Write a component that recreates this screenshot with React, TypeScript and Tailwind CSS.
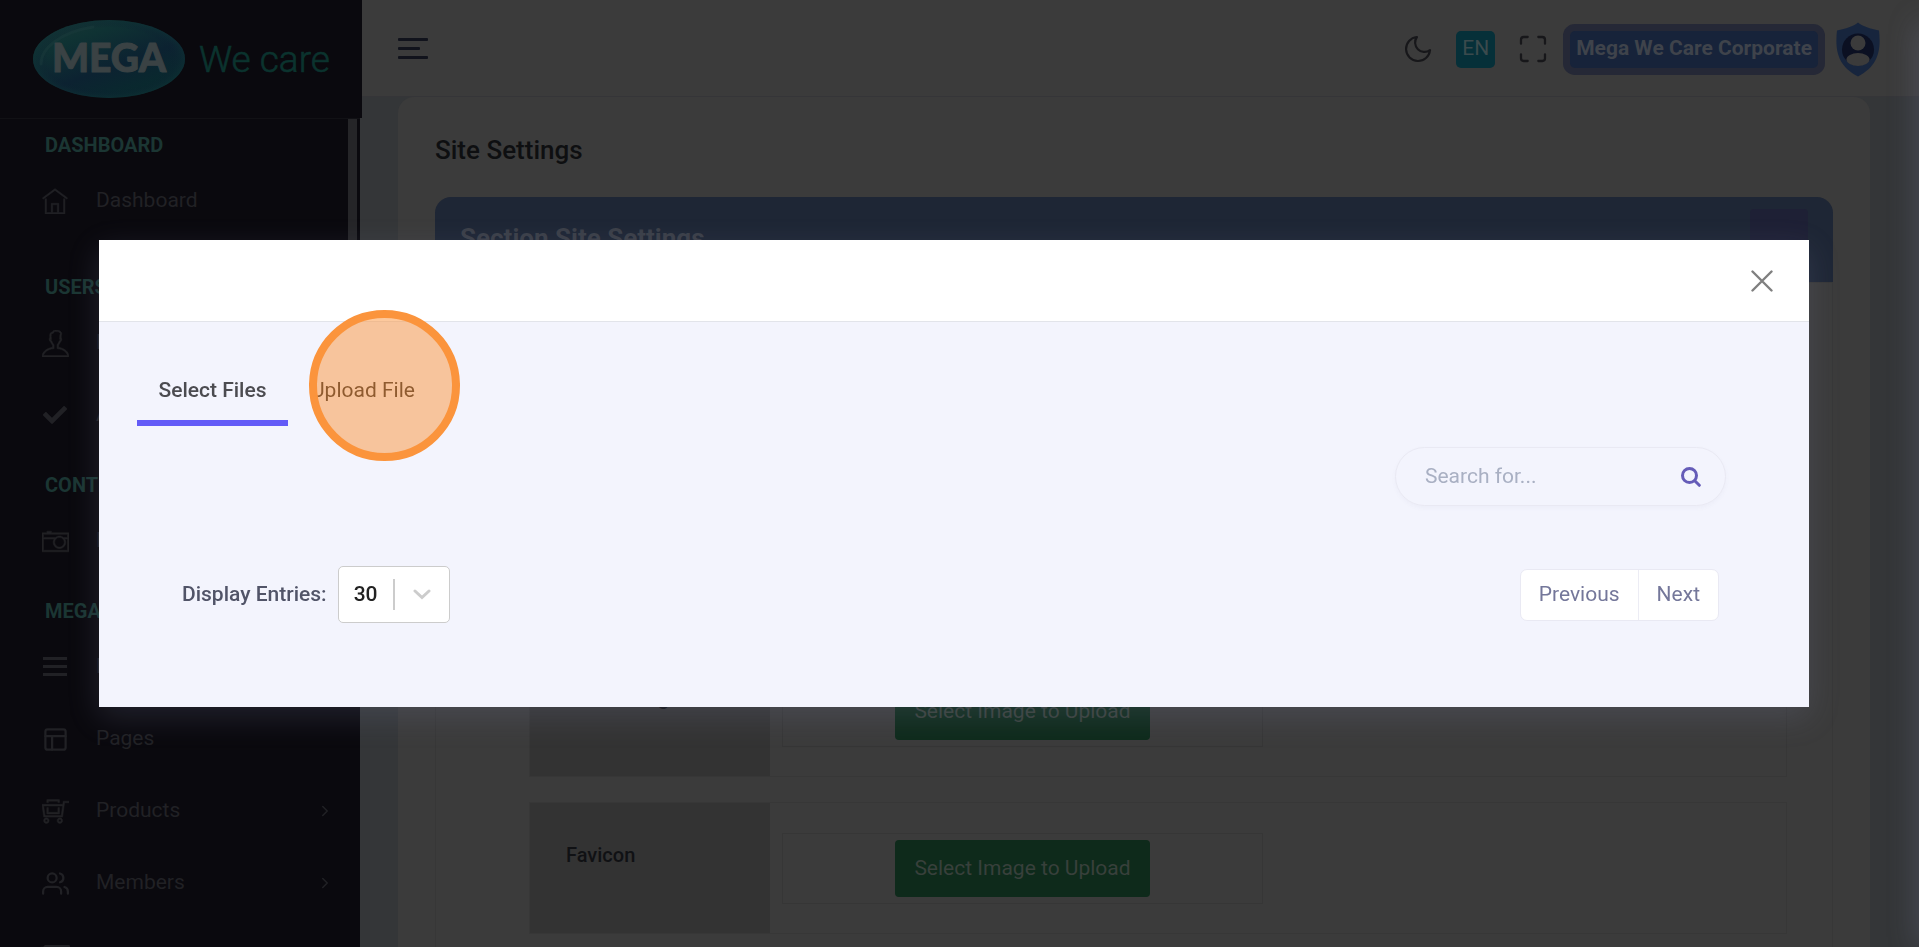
import React from 'react';
import { TfiHome, TfiUser, TfiCamera, TfiShoppingCartFull } from 'react-icons/tfi';
import { FiLayout, FiUsers, FiMaximize, FiMoon, FiChevronRight } from 'react-icons/fi';
import { FaCheck, FaRegNewspaper } from 'react-icons/fa';

type Item = { label: string; icon: React.ReactNode; more?: boolean; iconOnly?: boolean };
type Group = { title: string; items: Item[] };

const BarsIcon = () => (
  <svg width="26" height="26" viewBox="0 0 26 26" fill="currentColor">
    <rect x="1" y="3" width="24" height="3" />
    <rect x="1" y="11" width="24" height="3" />
    <rect x="1" y="19" width="24" height="3" />
  </svg>
);

const groups: Group[] = [
  { title: 'DASHBOARD', items: [{ label: 'Dashboard', icon: <TfiHome size={26} strokeWidth={0.3} /> }] },
  {
    title: 'USERS',
    items: [
      { label: 'Profile', icon: <TfiUser size={27} strokeWidth={0.3} /> },
      { label: 'Approval', icon: <FaCheck size={24} /> },
    ],
  },
  { title: 'CONTENT', items: [{ label: 'Media', icon: <TfiCamera size={27} strokeWidth={0.3} /> }] },
  {
    title: 'MEGA',
    items: [
      { label: 'Menus', icon: <BarsIcon /> },
      { label: 'Pages', icon: <FiLayout size={27} /> },
      { label: 'Products', icon: <TfiShoppingCartFull size={27} strokeWidth={0.3} />, more: true },
      { label: 'Members', icon: <FiUsers size={27} />, more: true },
      { label: 'News', icon: <FaRegNewspaper size={30} />, iconOnly: true },
    ],
  },
];

function Logo() {
  return (
    <svg width="300" height="84" viewBox="0 0 300 84" role="img" aria-label="MEGA We care">
      <defs>
        <linearGradient id="oval" x1="0" y1="0" x2="0.7" y2="1">
          <stop offset="0" stopColor="#1a3836" />
          <stop offset="0.3" stopColor="#0f3233" />
          <stop offset="0.65" stopColor="#0c2231" />
          <stop offset="1" stopColor="#082b2d" />
        </linearGradient>
        <radialGradient id="edge" cx="0.5" cy="0.5" r="0.5">
          <stop offset="0.8" stopColor="#0d1c30" stopOpacity="0" />
          <stop offset="1" stopColor="#0e3034" stopOpacity="0.6" />
        </radialGradient>
      </defs>
      <ellipse cx="76" cy="43" rx="76" ry="39" fill="url(#oval)" />
      <ellipse cx="76" cy="43" rx="76" ry="39" fill="url(#edge)" />
      <path d="M8 48C8 32 28 16 60 11" fill="none" stroke="#1f3f3e" strokeWidth="3" strokeLinecap="round" opacity="0.4" />
      <text
        x="76"
        y="56"
        textAnchor="middle"
        fontFamily="Lato, sans-serif"
        fontWeight="900"
        fontSize="39"
        fill="#3a4244"
        stroke="#3a4244"
        strokeWidth="1"
        strokeLinejoin="round"
      >
        MEGA
      </text>
      <text x="166" y="56" fontFamily="Roboto, sans-serif" fontWeight="300" fontSize="37" fill="#0b332e" stroke="#0b332e" strokeWidth="0.6">
        We care
      </text>
    </svg>
  );
}

function Sidebar() {
  return (
    <aside className="flex w-[362px] shrink-0 flex-col overflow-hidden">
      <div className="flex h-[118px] shrink-0 items-center bg-[#0a090e] pb-[2px] pl-[33px]">
        <Logo />
      </div>
      <div className="mr-[2px] flex min-h-0 flex-1 border-t border-[#111115] bg-[#0a090e]">
        <nav className="flex-1 pt-[7px]" aria-label="Main">
          {groups.map((g, i) => (
            <section key={g.title} className={i === 0 ? '' : i === 1 ? 'pt-8' : 'pt-4'}>
              <h2 className="flex h-[38px] items-center pl-[45px] text-[20px] font-bold text-[#1b3633]">{g.title}</h2>
              {g.items.map((it) => (
                <a
                  key={it.label}
                  href="#"
                  aria-label={it.label}
                  className="flex h-[72px] items-center pl-10 pr-[14px] pt-[2px] text-[21px] text-[#212125]"
                >
                  <span className="flex w-[30px] justify-center">{it.icon}</span>
                  {!it.iconOnly && <span className="ml-[26px] flex-1">{it.label}</span>}
                  {it.more && <FiChevronRight size={18} />}
                </a>
              ))}
            </section>
          ))}
        </nav>
        <div className="mr-[3px] h-[360px] w-[9px] bg-[#252528]" />
      </div>
    </aside>
  );
}

function Header() {
  return (
    <header className="flex h-[97px] shrink-0 items-center justify-between border-b border-[#353538] bg-[#3b3b3b] pl-9 pr-[39px]">
      <button aria-label="Toggle sidebar" className="text-[#11131c]">
        <svg width="30" height="22" viewBox="0 0 30 22" fill="currentColor">
          <rect width="30" height="3" rx="1" y="1" />
          <rect width="22" height="3" rx="1" y="10" />
          <rect width="30" height="3" rx="1" y="19" />
        </svg>
      </button>
      <div className="flex items-center pt-[2px] text-[#17171a]">
        <button aria-label="Dark mode">
          <FiMoon size={32} strokeWidth={1.6} />
        </button>
        <button className="ml-[22px] h-[37px] w-[39px] rounded-[5px] bg-[#063039] text-[21px] text-[#3b4a4d]">EN</button>
        <button aria-label="Full screen" className="ml-[22px]">
          <FiMaximize size={32} strokeWidth={1.7} />
        </button>
        <button className="ml-[21px] h-[37px] rounded-[5px] bg-[#17233a] px-[6px] text-[21px] font-bold text-[#3f434b] ring-[7px] ring-[#252836]">
          Mega We Care Corporate
        </button>
        <button aria-label="Account" className="ml-[18px]">
          <svg width="44" height="55" viewBox="0 0 44 54">
            <path d="M22 0C27 4 34 6 43 8C45 27 43 43 22 54C1 43 -1 27 1 8C10 6 17 4 22 0Z" fill="#17253d" />
            <circle cx="22" cy="27" r="16" fill="#0b1022" />
            <circle cx="22" cy="20.5" r="7.5" fill="#3b3b3b" />
            <ellipse cx="22" cy="37" rx="11.5" ry="6.5" fill="#3b3b3b" />
          </svg>
        </button>
      </div>
    </header>
  );
}

function UploadRow({ label }: { label: string }) {
  return (
    <div className="flex h-[132px] border border-[#373737]">
      <div className="w-[240px] bg-[#333333] pl-9 pt-[37px] text-[20px] leading-[30px] font-medium text-[#101114]">{label}</div>
      <div className="flex flex-1 items-center pl-3">
        <div className="flex h-[71px] w-[481px] items-center justify-center border border-[#363636]">
          <button className="h-[57px] rounded-[4px] bg-[#0e2a1b] px-[19px] pt-[2px] text-[21px] text-[#38403b]">Select Image to Upload</button>
        </div>
      </div>
    </div>
  );
}

function SettingsPage() {
  return (
    <main className="flex-1 pl-9 pr-[49px]">
      <div className="h-[900px] rounded-t-2xl bg-[#3b3b3b] px-[37px] pt-[35px]">
        <h1 className="text-[26px] leading-[36px] font-medium text-[#0e0f11]">Site Settings</h1>
        <div className="mt-[29px] flex h-[85px] items-center justify-between rounded-t-2xl bg-[#1e2635] pb-[2px] pl-[25px] pr-[25px]">
          <h2 className="text-[26px] font-bold text-[#3b3f48]">Section Site Settings</h2>
          <button aria-label="Collapse section" className="h-[60px] w-[58px] rounded bg-[#1e2035]" />
        </div>
        <div className="flex h-full flex-col gap-[25px] border border-[#373737] pl-[93px] pr-[45px] pt-[362px]">
          <UploadRow label="Header Logo" />
          <UploadRow label="Favicon" />
        </div>
      </div>
    </main>
  );
}

function FileDialog() {
  return (
    <div className="fixed inset-0 flex items-center pl-[99px] pr-[110px]">
      <div
        role="dialog"
        aria-modal="true"
        aria-label="Choose a file"
        className="relative flex-1 bg-[#f3f4fd] shadow-[0_10px_30px_0_rgba(130,135,170,0.2)]"
      >
        <div className="flex h-[82px] items-center justify-end border-b border-[#e2e4ea] bg-white pr-9">
          <button aria-label="Close" className="text-[#7f7f7f]">
            <svg width="22" height="22" viewBox="0 0 22 22" fill="none" stroke="currentColor" strokeWidth="2.4" strokeLinecap="round">
              <path d="M1.5 1.5L20.5 20.5M20.5 1.5L1.5 20.5" />
            </svg>
          </button>
        </div>
        <div className="px-[38px] pb-[84px] pt-[33px]">
          <div role="tablist" className="flex h-[71px] text-[21px] text-[#4b4b50]">
            <button role="tab" aria-selected="true" className="w-[151px] border-b-[6px] border-[#635bf7] pt-[6px] font-medium">
              Select Files
            </button>
            <button role="tab" aria-selected="false" className="relative ml-[17px] border-b-[6px] border-transparent px-[6px] pt-[6px] text-[#222222]">
              Upload File
              <span className="pointer-events-none absolute left-1 top-[-45px] size-[151px] rounded-full border-8 border-[#fb943c] bg-[#fb943c]/50" />
            </button>
          </div>
          <div className="mr-[45px] mt-[21px] flex justify-end">
            <label className="flex h-[59px] w-[331px] items-center rounded-full border border-[#e9e9f3] pl-[29px] pr-6 shadow-[0_2px_4px_0_rgba(110,110,160,0.05)]">
              <input
                type="text"
                aria-label="Search files"
                placeholder="Search for..."
                className="min-w-0 flex-1 bg-transparent text-[21px] outline-none placeholder:text-[#a9b0c3]"
              />
              <svg width="20" height="20" viewBox="0 0 20 20" fill="none" stroke="#655cb8" strokeWidth="3" strokeLinecap="round">
                <circle cx="8.5" cy="8.5" r="7" />
                <path d="M14 14L18.3 18.3" />
              </svg>
            </label>
          </div>
          <div className="mt-[60px] flex items-center justify-between pl-[45px] pr-[52px]">
            <div className="flex items-center gap-[11px]">
              <label htmlFor="entries" className="text-[21px] font-medium text-[#515468]">
                Display Entries:
              </label>
              <div className="relative h-[57px] w-[112px]">
                <select
                  id="entries"
                  defaultValue="30"
                  className="h-full w-full appearance-none rounded-[5px] border border-[#cccccc] bg-white pl-[15px] text-[21px] font-medium text-[#222222]"
                >
                  <option>30</option>
                  <option>60</option>
                  <option>90</option>
                </select>
                <span className="pointer-events-none absolute right-[19px] top-[13px] flex h-[31px] items-center border-l-2 border-[#cccccc] pl-[18px] text-[#cccccc]">
                  <svg width="18" height="11" viewBox="0 0 18 11" fill="none" stroke="currentColor" strokeWidth="3" strokeLinecap="round">
                    <path d="M2 2L9 8.5L16 2" />
                  </svg>
                </span>
              </div>
            </div>
            <div className="flex h-[52px] divide-x divide-[#ececf4] overflow-hidden rounded-[7px] border border-[#e9e9f3] bg-white text-[21px] text-[#74779a]">
              <button className="px-[18px]">Previous</button>
              <button className="px-[18px]">Next</button>
            </div>
          </div>
        </div>
      </div>
    </div>
  );
}

export default function App() {
  return (
    <div className="relative flex h-screen overflow-hidden bg-[#343638] font-[Roboto,'Noto_Sans',sans-serif]">
      <Sidebar />
      <div className="flex min-w-0 flex-1 flex-col">
        <Header />
        <SettingsPage />
      </div>
      <div className="pointer-events-none absolute -right-5 bottom-0 top-6 w-5 shadow-[0_0_30px_0_rgba(130,135,170,0.35)]" />
      <FileDialog />
    </div>
  );
}
